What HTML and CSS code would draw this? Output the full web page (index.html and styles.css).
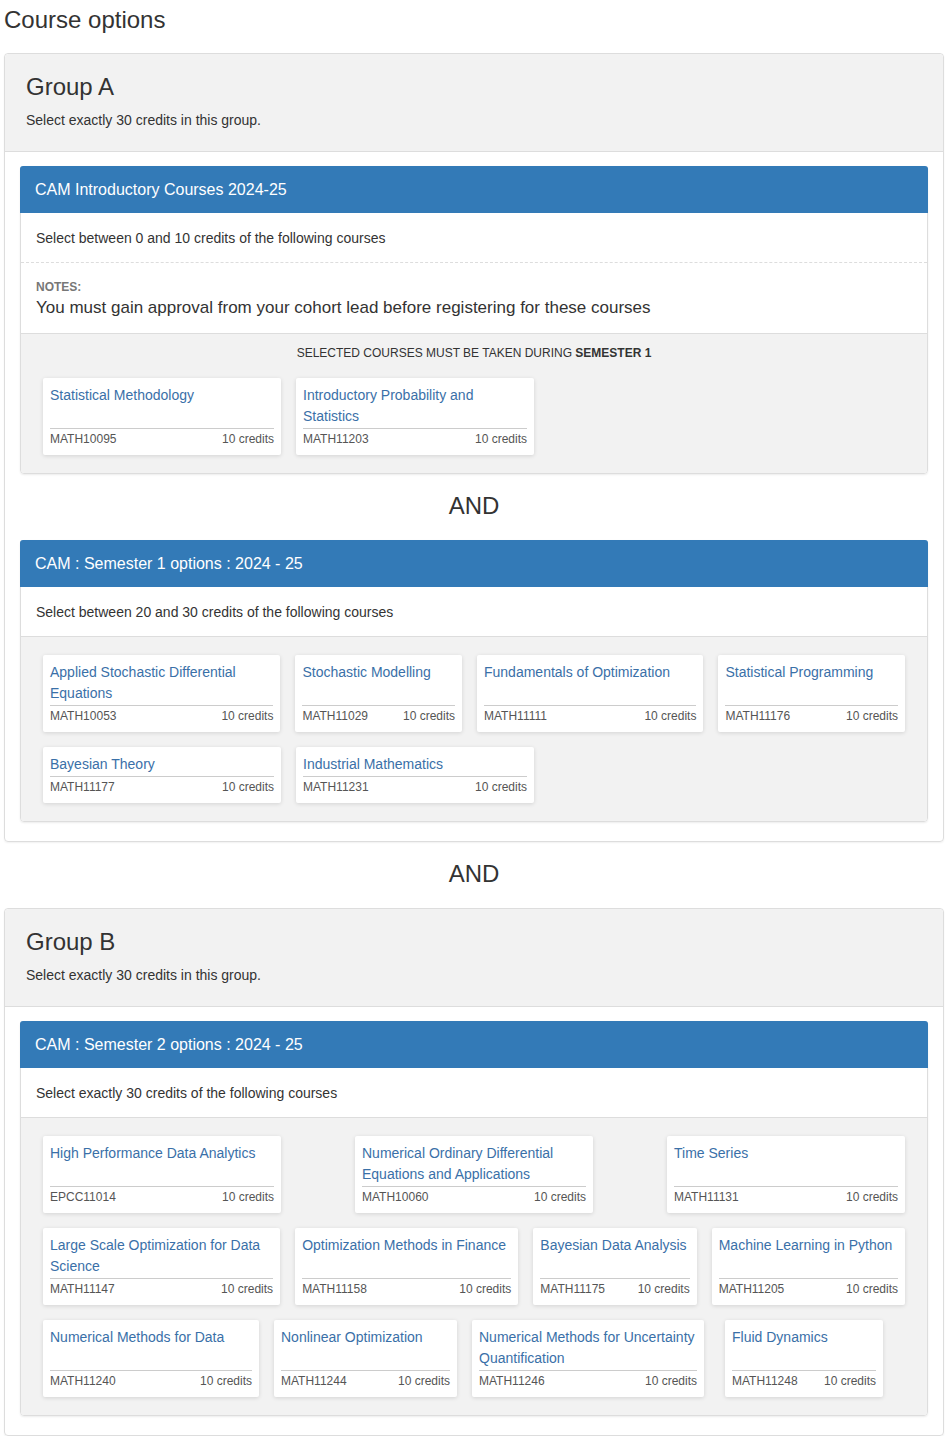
FILE: index.html
```html
<!DOCTYPE html>
<html lang="en">
<head>
    <meta charset="UTF-8">
    <meta name="viewport" content="width=device-width, initial-scale=1.0">
    <title>Course options</title>
    <link rel="stylesheet" href="styles.css">
</head>
<body>
    <div class="page">
        <h1 class="page-title">Course options</h1>

        <section class="group">
            <header class="group-head">
                <h2>Group A</h2>
                <p>Select exactly 30 credits in this group.</p>
            </header>
            <div class="group-body">
                <div class="block">
                    <div class="block-head">CAM Introductory Courses 2024-25</div>
                    <div class="block-rule dashed">Select between 0 and 10 credits of the following courses</div>
                    <div class="block-notes">
                        <div class="notes-label">Notes:</div>
                        <div class="notes-text">You must gain approval from your cohort lead before registering for these courses</div>
                    </div>
                    <div class="block-courses">
                        <div class="semester">Selected courses must be taken during <b>Semester 1</b></div>
                        <div class="card-row">
                            <a class="course" href="#"><span class="course-title">Statistical Methodology</span><span class="course-meta"><span>MATH10095</span><span>10 credits</span></span></a>
                            <a class="course" href="#"><span class="course-title">Introductory Probability and Statistics</span><span class="course-meta"><span>MATH11203</span><span>10 credits</span></span></a>
                        </div>
                    </div>
                </div>

                <div class="and">AND</div>

                <div class="block">
                    <div class="block-head">CAM : Semester 1 options : 2024 - 25</div>
                    <div class="block-rule">Select between 20 and 30 credits of the following courses</div>
                    <div class="block-courses">
                        <div class="card-row">
                            <a class="course" href="#"><span class="course-title">Applied Stochastic Differential Equations</span><span class="course-meta"><span>MATH10053</span><span>10 credits</span></span></a>
                            <a class="course" href="#" style="width:167px"><span class="course-title">Stochastic Modelling</span><span class="course-meta"><span>MATH11029</span><span>10 credits</span></span></a>
                            <a class="course" href="#" style="width:227px"><span class="course-title">Fundamentals of Optimization</span><span class="course-meta"><span>MATH11111</span><span>10 credits</span></span></a>
                            <a class="course" href="#" style="width:187px"><span class="course-title">Statistical Programming</span><span class="course-meta"><span>MATH11176</span><span>10 credits</span></span></a>
                        </div>
                        <div class="card-row">
                            <a class="course" href="#"><span class="course-title">Bayesian Theory</span><span class="course-meta"><span>MATH11177</span><span>10 credits</span></span></a>
                            <a class="course" href="#"><span class="course-title">Industrial Mathematics</span><span class="course-meta"><span>MATH11231</span><span>10 credits</span></span></a>
                        </div>
                    </div>
                </div>
            </div>
        </section>

        <div class="and">AND</div>

        <section class="group">
            <header class="group-head">
                <h2>Group B</h2>
                <p>Select exactly 30 credits in this group.</p>
            </header>
            <div class="group-body">
                <div class="block">
                    <div class="block-head">CAM : Semester 2 options : 2024 - 25</div>
                    <div class="block-rule">Select exactly 30 credits of the following courses</div>
                    <div class="block-courses">
                        <div class="card-row spread">
                            <a class="course" href="#"><span class="course-title">High Performance Data Analytics</span><span class="course-meta"><span>EPCC11014</span><span>10 credits</span></span></a>
                            <a class="course" href="#"><span class="course-title">Numerical Ordinary Differential Equations and Applications</span><span class="course-meta"><span>MATH10060</span><span>10 credits</span></span></a>
                            <a class="course" href="#"><span class="course-title">Time Series</span><span class="course-meta"><span>MATH11131</span><span>10 credits</span></span></a>
                        </div>
                        <div class="card-row">
                            <a class="course" href="#"><span class="course-title">Large Scale Optimization for Data Science</span><span class="course-meta"><span>MATH11147</span><span>10 credits</span></span></a>
                            <a class="course" href="#" style="width:224px"><span class="course-title">Optimization Methods in Finance</span><span class="course-meta"><span>MATH11158</span><span>10 credits</span></span></a>
                            <a class="course" href="#" style="width:164px"><span class="course-title">Bayesian Data Analysis</span><span class="course-meta"><span>MATH11175</span><span>10 credits</span></span></a>
                            <a class="course" href="#" style="width:194px"><span class="course-title">Machine Learning in Python</span><span class="course-meta"><span>MATH11205</span><span>10 credits</span></span></a>
                        </div>
                        <div class="card-row">
                            <a class="course" href="#" style="width:216px"><span class="course-title">Numerical Methods for Data</span><span class="course-meta"><span>MATH11240</span><span>10 credits</span></span></a>
                            <a class="course" href="#" style="width:183px"><span class="course-title">Nonlinear Optimization</span><span class="course-meta"><span>MATH11244</span><span>10 credits</span></span></a>
                            <a class="course" href="#" style="width:232px"><span class="course-title">Numerical Methods for Uncertainty Quantification</span><span class="course-meta"><span>MATH11246</span><span>10 credits</span></span></a>
                            <a class="course last-shift" href="#" style="width:158px"><span class="course-title">Fluid Dynamics</span><span class="course-meta"><span>MATH11248</span><span>10 credits</span></span></a>
                        </div>
                    </div>
                </div>
            </div>
        </section>
    </div>
</body>
</html>
```

FILE: styles.css
```css
body {
    margin: 0;
    background-color: #ffffff;
    font-family: 'Liberation Sans', Arial, sans-serif;
    font-size: 14px;
    line-height: 20px;
    color: #333;
}

.page {
    width: 940px;
    padding: 0 4px;
}

.page-title {
    font-size: 24px;
    font-weight: normal;
    line-height: 26px;
    margin: 7px 0 20px;
}

/* group box */

.group {
    border: 1px solid #dddddd;
    border-radius: 4px;
    box-shadow: 0 1px 2px rgba(0, 0, 0, 0.06);
}

.group-head {
    background-color: #f2f2f2;
    border-bottom: 1px solid #dddddd;
    border-radius: 4px 4px 0 0;
    padding: 20px 21px 21px;
}

.group-head h2 {
    font-size: 24px;
    font-weight: normal;
    line-height: 26px;
    margin: 0 0 10px;
}

.group-head p {
    margin: 0;
}

.group-body {
    padding: 14px 15px 19px;
}

/* course block */

.block {
    border: 1px solid #dddddd;
    border-radius: 4px;
    box-shadow: 0 1px 2px rgba(0, 0, 0, 0.08);
}

.block-head {
    background-color: #337ab7;
    color: #ffffff;
    font-size: 16px;
    line-height: 21px;
    padding: 13px 15px 13px;
    margin: -1px -1px 0;
    border-radius: 3px 3px 0 0;
}

.block-rule {
    padding: 15px 15px 14px;
    border-bottom: 1px solid #dddddd;
}

.block-rule.dashed {
    border-bottom: 1px dashed #dddddd;
}

.block-notes {
    padding: 16px 15px 13px;
    border-bottom: 1px solid #dddddd;
}

.notes-label {
    font-size: 12px;
    font-weight: bold;
    line-height: 16px;
    color: #777;
    text-transform: uppercase;
    margin-bottom: 1px;
}

.notes-text {
    font-size: 17px;
    line-height: 24px;
}

.block-courses {
    background-color: #f2f2f2;
    border-radius: 0 0 3px 3px;
    padding: 18px 22px 18px;
}

.semester {
    font-size: 12px;
    line-height: 16px;
    text-align: center;
    text-transform: uppercase;
    margin: -7px 0 17px;
}

/* cards */

.card-row {
    display: flex;
    gap: 15px;
}

.card-row + .card-row {
    margin-top: 15px;
}

.card-row.spread {
    justify-content: space-between;
}

.course {
    display: flex;
    flex-direction: column;
    box-sizing: border-box;
    width: 238px;
    padding: 7px 7px 8px;
    background-color: #ffffff;
    border-radius: 2px;
    box-shadow: 0 1px 4px rgba(0, 0, 0, 0.13);
    text-decoration: none;
}

.course.last-shift {
    margin-left: 6px;
}

.course-title {
    flex: 1;
    color: #3a70a8;
    line-height: 21px;
}

.course-meta {
    display: flex;
    justify-content: space-between;
    margin-top: 1px;
    padding-top: 2px;
    border-top: 1px solid #cccccc;
    font-size: 12px;
    line-height: 16px;
    color: #555;
}

.and {
    font-size: 24px;
    line-height: 26px;
    text-align: center;
    margin: 19px 0 21px;
}
```
